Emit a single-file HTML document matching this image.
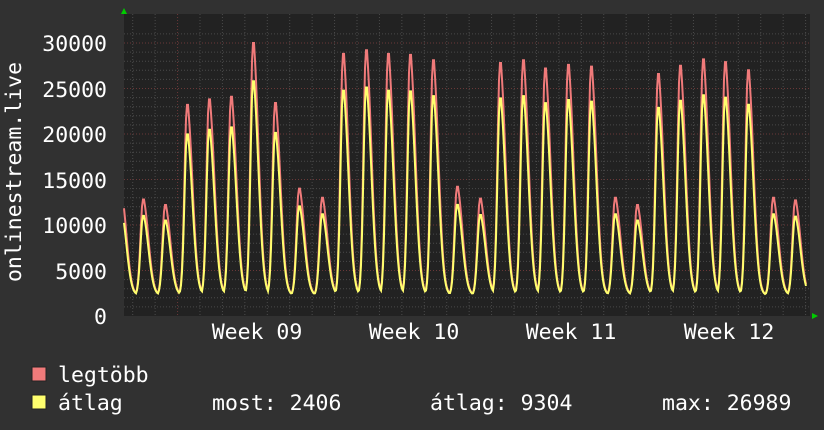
<!DOCTYPE html>
<html><head><meta charset="utf-8"><style>
html,body{margin:0;padding:0;background:#313131;}
svg{display:block}
text{font-family:"DejaVu Sans Mono","Liberation Mono",monospace;fill:#fff;}
</style></head><body>
<svg id="g" width="824" height="430" viewBox="0 0 824 430" xmlns="http://www.w3.org/2000/svg">
<rect width="824" height="430" fill="#313131"/>
<rect x="124" y="14" width="686" height="302" fill="#222222"/>
<g id="grid"></g>
<polyline id="mx" fill="none" stroke="#f07a7a" stroke-width="2"/>
<polyline id="av" fill="none" stroke="#ffff6e" stroke-width="2"/>
<polygon points="121,14 127,14 124,8" fill="#00cc00"/>
<polygon points="812,313 812,319 818,316" fill="#00cc00"/>
<g font-size="21.5" text-anchor="end">
<text x="107" y="51">30000</text>
<text x="107" y="97">25000</text>
<text x="107" y="142">20000</text>
<text x="107" y="188">15000</text>
<text x="107" y="233">10000</text>
<text x="107" y="279">5000</text>
<text x="107" y="324">0</text>
</g>
<g font-size="21.5" text-anchor="middle">
<text x="257" y="339">Week 09</text>
<text x="414" y="339">Week 10</text>
<text x="571" y="339">Week 11</text>
<text x="729" y="339">Week 12</text>
</g>
<text font-size="21.5" text-anchor="middle" transform="translate(21,172) rotate(-90)">onlinestream.live</text>
<rect x="32" y="367" width="14" height="14" fill="#f07a7a" stroke="#222" stroke-width="1"/>
<rect x="32" y="395" width="14" height="14" fill="#ffff6e" stroke="#222" stroke-width="1"/>
<g font-size="21.5">
<text x="58" y="382">legtöbb</text>
<text x="58" y="410">átlag</text>
<text x="212" y="410">most: 2406</text>
<text x="430" y="410">átlag: 9304</text>
<text x="662" y="410">max: 26989</text>
</g>
</svg>
<script>
var g=document.getElementById('grid'),s='';
function Y(v){return 316-v*0.0091;}
for(var v=1000;v<=31000;v+=1000){var y=Y(v);var maj=v%5000==0;
s+='<line x1="124" x2="810" y1="'+y+'" y2="'+y+'" stroke="'+(maj?'#6a3838':'#4a4a4a')+'" stroke-dasharray="1,2"/>';}
for(var i=0;i<31;i++){var x=132.7+i*22.43;var maj=Math.abs((x-177.6)%157)<1;
s+='<line y1="14" y2="316" x1="'+x+'" x2="'+x+'" stroke="'+(maj?'#6a3838':'#4a4a4a')+'" stroke-dasharray="1,2"/>';}
g.innerHTML=s;
var peaks=[[143,12800],[165,12200],[187,23200],[209,23800],[231,24100],[253,30000],[275,23400],[299,14000],[322,13000],[343,28800],[366,29200],[388,28800],[410,28700],[433,28100],[457,14200],[480,12900],[500,27800],[523,28100],[545,27200],[568,27600],[591,27400],[615,13000],[637,12200],[658,26600],[680,27500],[703,28200],[725,27900],[748,27000],[773,13000],[795,12700]];
function val(x,k){
 var best=0;
 for(var i=-1;i<peaks.length;i++){
  var px=i<0?121:peaks[i][0],pv=i<0?13500:peaks[i][1];
  var d=x-px,w;
  if(d<0) w=Math.exp(-Math.pow(d/3.6,2)); else w=Math.exp(-Math.pow(d/7.5,2));
  if(d>=0&&d<2) w=1;
  best=Math.max(best,(pv*k-2300)*w);
 }
 return 2300+best;
}
var a='',b='';
for(var x=124;x<=806;x+=1){a+=x+','+Y(val(x,1))+' ';b+=x+','+Y(val(x,0.86))+' ';}
document.getElementById('mx').setAttribute('points',a);
document.getElementById('av').setAttribute('points',b);
</script>
</body></html>
